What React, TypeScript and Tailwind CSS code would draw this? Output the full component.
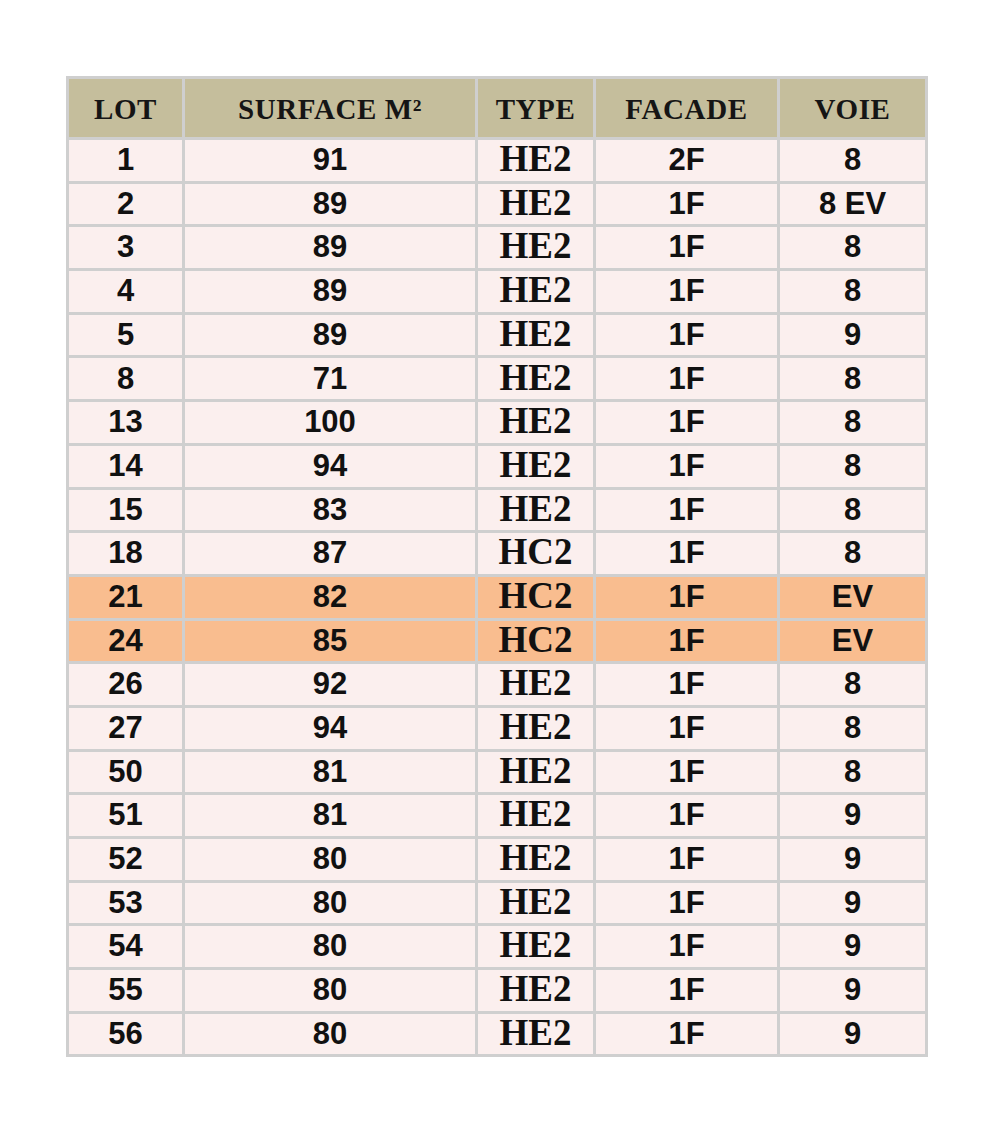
import React from "react";

type Row = [string, string, string, string, string, boolean?];

const rows: Row[] = [
  ["1", "91", "HE2", "2F", "8"],
  ["2", "89", "HE2", "1F", "8 EV"],
  ["3", "89", "HE2", "1F", "8"],
  ["4", "89", "HE2", "1F", "8"],
  ["5", "89", "HE2", "1F", "9"],
  ["8", "71", "HE2", "1F", "8"],
  ["13", "100", "HE2", "1F", "8"],
  ["14", "94", "HE2", "1F", "8"],
  ["15", "83", "HE2", "1F", "8"],
  ["18", "87", "HC2", "1F", "8"],
  ["21", "82", "HC2", "1F", "EV", true],
  ["24", "85", "HC2", "1F", "EV", true],
  ["26", "92", "HE2", "1F", "8"],
  ["27", "94", "HE2", "1F", "8"],
  ["50", "81", "HE2", "1F", "8"],
  ["51", "81", "HE2", "1F", "9"],
  ["52", "80", "HE2", "1F", "9"],
  ["53", "80", "HE2", "1F", "9"],
  ["54", "80", "HE2", "1F", "9"],
  ["55", "80", "HE2", "1F", "9"],
  ["56", "80", "HE2", "1F", "9"],
];

const headers = ["LOT", "SURFACE M²", "TYPE", "FACADE", "VOIE"];

const sans =
  "flex items-center justify-center text-[31px] font-bold text-[#111] [font-family:'Liberation_Sans',Arial,sans-serif]";

export default function App() {
  return (
    <div className="min-h-[1140px] w-[982px] bg-white pt-[76px] pl-[66px]">
      <div className="grid w-[862px] grid-cols-[113px_290px_115px_181px_145px] grid-rows-[58px_repeat(21,40.7px)] gap-[3px] border-[3px] border-[#cfcfcf] bg-[#cfcfcf]">
        {headers.map((h) => (
          <div
            key={h}
            className="flex items-center justify-center bg-[#c5be9c] pt-[3px] text-[29px] font-bold tracking-[0.6px] text-[#151515] [font-family:'Liberation_Serif',serif]"
          >
            {h}
          </div>
        ))}
        {rows.map((r) => {
          const bg = r[5] ? "bg-[#f9bd8f]" : "bg-[#fbefee]";
          return (
            <React.Fragment key={r[0]}>
              <div className={`${sans} ${bg}`}>{r[0]}</div>
              <div className={`${sans} ${bg}`}>{r[1]}</div>
              <div
                className={`flex items-center justify-center ${bg} pb-[3px] text-[37px] font-bold text-[#111] [font-family:'Liberation_Serif',serif]`}
              >
                {r[2]}
              </div>
              <div className={`${sans} ${bg}`}>{r[3]}</div>
              <div className={`${sans} ${bg}`}>{r[4]}</div>
            </React.Fragment>
          );
        })}
      </div>
    </div>
  );
}
